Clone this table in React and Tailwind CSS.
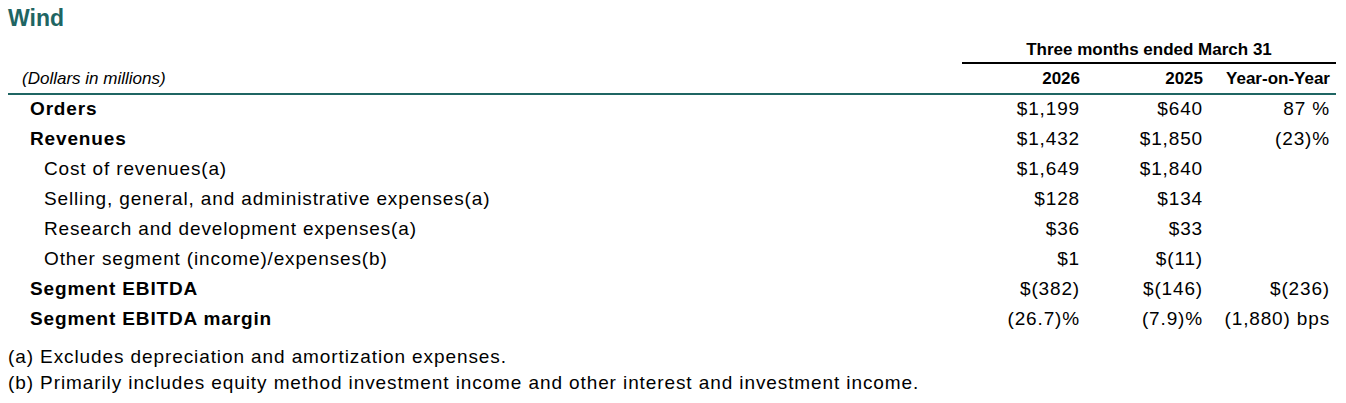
import React from "react";

const rows = [
  { label: "Orders", bold: true, a: "$1,199", b: "$640", c: "87 %" },
  { label: "Revenues", bold: true, a: "$1,432", b: "$1,850", c: "(23)%" },
  { label: "Cost of revenues(a)", a: "$1,649", b: "$1,840", c: "" },
  { label: "Selling, general, and administrative expenses(a)", a: "$128", b: "$134", c: "" },
  { label: "Research and development expenses(a)", a: "$36", b: "$33", c: "" },
  { label: "Other segment (income)/expenses(b)", a: "$1", b: "$(11)", c: "" },
  { label: "Segment EBITDA", bold: true, a: "$(382)", b: "$(146)", c: "$(236)" },
  { label: "Segment EBITDA margin", bold: true, a: "(26.7)%", b: "(7.9)%", c: "(1,880) bps" },
];

const narrow = "font-bold font-['Liberation_Sans_Narrow','Arial_Narrow',sans-serif]";

export default function App() {
  return (
    <div className="w-[1346px] h-[403px] bg-white text-black font-['Liberation_Sans',Arial,sans-serif]">
      <div className="pl-[8px] pr-[10px]">
        <div className="h-[36px] pt-[5px] text-[23px] font-bold text-[#1f6563] leading-[26px]">Wind</div>
        <div className="flex">
          <div className="flex-1" />
          <div className={"w-[374px] h-[28px] flex items-center justify-center text-[17px] leading-none border-b-2 border-black " + narrow}>
            Three months ended March 31
          </div>
        </div>
        <div className="flex h-[31px] items-center border-b-2 border-[#1f6563] text-[17px] leading-none">
          <div className="flex-1 pl-[14px] italic">(Dollars in millions)</div>
          <div className={"w-[118px] text-right " + narrow}>2026</div>
          <div className={"w-[123px] text-right " + narrow}>2025</div>
          <div className={"w-[127px] text-right " + narrow}>Year-on-Year</div>
          <div className="w-[6px]" />
        </div>
        {rows.map((r, i) => (
          <div key={i} className="flex h-[30px] pb-[3px] items-center text-[19px] leading-none tracking-[0.85px]">
            <div className={"flex-1 " + (r.bold ? "pl-[22px] font-bold" : "pl-[36px]")}>{r.label}</div>
            <div className="w-[118px] text-right">{r.a}</div>
            <div className="w-[123px] text-right">{r.b}</div>
            <div className="w-[127px] text-right">{r.c}</div>
            <div className="w-[6px]" />
          </div>
        ))}
        <div className="mt-[9px] text-[19px] leading-[26px] tracking-[0.9px]">
          <div>(a) Excludes depreciation and amortization expenses.</div>
          <div>(b) Primarily includes equity method investment income and other interest and investment income.</div>
        </div>
      </div>
    </div>
  );
}
